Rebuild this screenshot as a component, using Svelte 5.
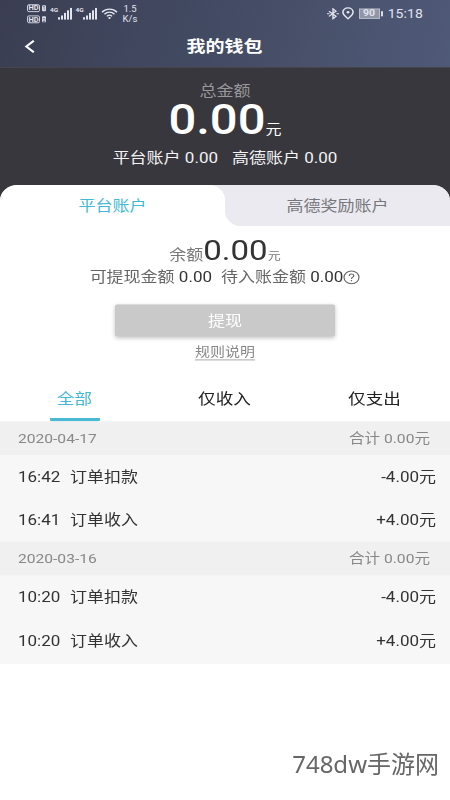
<script>
  const groups = [
    {
      date: '2020-04-17',
      total: '0.00',
      rows: [
        { time: '16:42', title: '订单扣款', amount: '-4.00' },
        { time: '16:41', title: '订单收入', amount: '+4.00' }
      ]
    },
    {
      date: '2020-03-16',
      total: '0.00',
      rows: [
        { time: '10:20', title: '订单扣款', amount: '-4.00' },
        { time: '10:20', title: '订单收入', amount: '+4.00' }
      ]
    }
  ];

  const filters = ['全部', '仅收入', '仅支出'];
  let activeFilter = 0;
</script>

<div class="viewport">
  <div class="screen">
    <header class="header">
      <div class="status-bar">
        <div class="hd-list">
          <div class="hd"><b>HD</b><i>1</i></div>
          <div class="hd"><b>HD</b><i>2</i></div>
        </div>
        {#each [0, 1] as sim (sim)}
          <div class="signal">
            <span>4G</span>
            <svg width="15" height="14" viewBox="0 0 15 14" fill="currentColor">
              <rect x="0" y="11" width="2" height="3" />
              <rect x="3" y="9" width="2" height="5" />
              <rect x="6" y="6" width="2" height="8" />
              <rect x="9" y="3" width="2" height="11" />
              <rect x="12" y="0" width="2" height="14" />
            </svg>
          </div>
        {/each}
        <svg width="17" height="14" viewBox="0 0 17 14" fill="none" stroke="currentColor" stroke-width="1.5">
          <path d="M1 5.2C5.2 0.4 11.8 0.4 16 5.2" />
          <path d="M3.5 7.6C6.3 4.4 10.7 4.4 13.5 7.6" />
          <path d="M6 10C7.5 8.2 9.5 8.2 11 10" />
          <circle cx="8.5" cy="12" r="1.2" fill="currentColor" stroke="none" />
        </svg>
        <div class="speed">1.5<br />K/s</div>
        <div class="status-right">
          <svg width="12" height="14" viewBox="0 0 12 14" fill="none" stroke="currentColor" stroke-width="1.4">
            <path d="M2 4L9 10L6 12.8V1.2L9 4L2 10" />
            <path d="M0 7H2.5M9.5 7H12" />
          </svg>
          <svg width="12" height="15" viewBox="0 0 12 15" fill="none" stroke="currentColor" stroke-width="1.6">
            <path d="M6 13.8C3.5 11.2 0.9 9 0.9 6.2C0.9 3.3 3.2 1.2 6 1.2S11.1 3.3 11.1 6.2C11.1 9 8.5 11.2 6 13.8Z" />
            <circle cx="6" cy="6.2" r="1.4" fill="currentColor" stroke="none" />
          </svg>
          <div class="battery">90</div>
          <span class="clock">15:18</span>
        </div>
      </div>
      <div class="nav">
        <svg class="back" width="12" height="16" viewBox="0 0 12 16" fill="none" stroke="currentColor" stroke-width="2.2">
          <path d="M9.8 1.3L2.3 8L9.8 14.7" />
        </svg>
        <h1>我的钱包</h1>
      </div>
    </header>

    <section class="summary">
      <div class="summary-label">总金额</div>
      <div class="summary-amount"><strong>0.00</strong><span>元</span></div>
      <div class="summary-detail">
        <span>平台账户 0.00</span>
        <span>高德账户 0.00</span>
      </div>
    </section>

    <div class="account-wrap">
      <div class="account-tabs">
        <div class="account-tab active"><span>平台账户</span></div>
        <div class="account-tab"><span>高德奖励账户</span></div>
      </div>
    </div>

    <section class="balance">
      <div class="balance-amount">余额<strong>0.00</strong><small>元</small></div>
      <div class="balance-detail">
        <span>可提现金额 <b>0.00</b></span>
        <span>待入账金额 <b>0.00</b></span>
        <svg width="17" height="17" viewBox="0 0 17 17" fill="none" stroke="currentColor" stroke-width="1.2">
          <circle cx="8.5" cy="8.5" r="7.5" />
          <path d="M6.3 6.8C6.3 3.8 10.8 3.9 10.8 6.6C10.8 8.3 8.5 8.4 8.5 10.3" />
          <path d="M8.5 11.6V13" />
        </svg>
      </div>
      <button class="withdraw">提现</button>
      <div class="rules"><span>规则说明</span></div>
    </section>

    <nav class="filters">
      {#each filters as filter, i}
        <button class="filter" class:active={activeFilter === i} on:click={() => (activeFilter = i)}>
          <span>{filter}</span>
        </button>
      {/each}
    </nav>

    {#each groups as group}
      <section class="group">
        <div class="group-head">
          <span>{group.date}</span>
          <span>合计 {group.total}元</span>
        </div>
        {#each group.rows as row}
          <div class="row">
            <span class="time">{row.time}</span>
            <span class="title">{row.title}</span>
            <span class="amount">{row.amount}元</span>
          </div>
        {/each}
      </section>
    {/each}
  </div>

  <div class="watermark">748dw手游网</div>
</div>

<style>
  :global(body) {
    margin: 0;
    background: #fff;
  }

  .viewport {
    position: relative;
    width: 450px;
    height: 800px;
    overflow: hidden;
    background: #fff;
  }

  /* tall phone screen fitted to the shorter frame */
  .screen {
    width: 450px;
    height: 930px;
    transform: scaleY(0.86);
    transform-origin: 0 0;
    font-family: Roboto, 'Noto Sans CJK SC', sans-serif;
    font-size: 17px;
    line-height: 20px;
    color: #333;
  }

  .header {
    height: 78px;
    color: #fff;
    background: linear-gradient(100deg, #3b3e52 0%, #414961 40%, #485069 65%, #4f5978 100%);
  }

  .status-bar {
    display: flex;
    align-items: center;
    height: 31px;
    padding: 0 27px;
    color: #e2e4ee;
  }

  .hd-list {
    display: flex;
    flex-direction: column;
    gap: 4px;
    width: 23px;
  }

  .hd {
    display: flex;
    align-items: center;
    gap: 2px;
    height: 9px;
    line-height: 7px;
  }

  .hd b {
    width: 11px;
    border: 1px solid #d9dbe6;
    border-radius: 2px;
    font-size: 7.5px;
    text-align: center;
  }

  .hd i {
    width: 4px;
    background: #d9dbe6;
    border-radius: 1px;
    font-style: normal;
    font-size: 6px;
    text-align: center;
    color: #454b62;
  }

  .signal {
    display: flex;
    width: 25.5px;
  }

  .signal span {
    width: 7.5px;
    font-size: 6.5px;
    font-weight: 700;
    line-height: 7px;
  }

  .speed {
    width: 18px;
    margin-left: 3px;
    font-size: 9.5px;
    line-height: 11px;
    text-align: center;
    white-space: nowrap;
  }

  .status-right {
    display: flex;
    align-items: center;
    gap: 3px;
    margin-left: auto;
  }

  .battery {
    position: relative;
    width: 19px;
    height: 10px;
    margin: 0 5px 0 2px;
    border: 1px solid #b9bdca;
    background: #9196a7;
    font-size: 10.5px;
    font-weight: 700;
    line-height: 10px;
    text-align: center;
  }

  .battery::after {
    content: '';
    position: absolute;
    top: 2px;
    right: -4px;
    width: 2px;
    height: 6px;
    background: #d9dbe6;
  }

  .clock {
    font-size: 14px;
    letter-spacing: 0.1px;
  }

  .nav {
    position: relative;
    display: flex;
    align-items: center;
    justify-content: center;
    height: 46px;
  }

  .back {
    position: absolute;
    left: 24px;
    top: 15px;
  }

  h1 {
    margin: 0 1px 0 0;
    font-size: 19px;
    font-weight: 700;
    line-height: 26px;
  }

  .summary {
    display: flex;
    flex-direction: column;
    align-items: center;
    box-sizing: border-box;
    height: 137.5px;
    padding-top: 18px;
    background: #38373d;
    color: #fff;
  }

  .summary-label {
    height: 20px;
    color: #98979c;
  }

  .summary-amount {
    display: flex;
    align-items: baseline;
    height: 40px;
    margin-top: 4px;
    line-height: 40px;
  }

  .summary-amount strong {
    font-size: 49px;
    font-weight: 500;
  }

  .summary-amount span {
    font-size: 16px;
  }

  .summary-detail {
    display: flex;
    gap: 14px;
    margin-top: 13px;
    color: #f2f2f3;
  }

  .account-wrap {
    margin-top: -1px;
    background: linear-gradient(#38373d 50%, #fff 50%);
  }

  .account-tabs {
    display: flex;
    height: 48.5px;
    border-radius: 18px 18px 0 0;
    overflow: hidden;
    background: linear-gradient(#ebeaf0 50%, #fff 50%);
  }

  .account-tab {
    flex: 1;
    display: flex;
    align-items: center;
    justify-content: center;
    border-bottom-left-radius: 17px;
    background: #ebeaf0;
    color: #77777b;
  }

  .account-tab.active {
    border-radius: 0 17px 0 0;
    background: #fff;
    color: #43b9d6;
  }

  .balance {
    display: flex;
    flex-direction: column;
    align-items: center;
    box-sizing: border-box;
    height: 170px;
    padding-top: 9px;
    color: #777;
  }

  .balance-amount {
    display: flex;
    align-items: baseline;
    height: 38px;
    line-height: 38px;
  }

  .balance-amount strong {
    font-size: 33px;
    font-weight: 400;
    color: #333;
  }

  .balance-amount small {
    font-size: 13px;
  }

  .balance-detail {
    display: flex;
    align-items: center;
    height: 20px;
    margin-top: 2px;
    color: #666;
  }

  .balance-detail span + span {
    margin-left: 9px;
  }

  .balance-detail b {
    font-weight: 400;
    color: #333;
  }

  .withdraw {
    width: 220px;
    height: 37px;
    margin-top: 22px;
    padding: 1px 0 0;
    border: 0;
    border-radius: 2px;
    background: #c9c9ca;
    box-shadow: 0 2px 5px rgba(0, 0, 0, 0.25);
    color: #fff;
    font: inherit;
  }

  .rules {
    margin-top: 9px;
    font-size: 15px;
    line-height: 18px;
    color: #888;
  }

  .rules span {
    display: block;
    border-bottom: 1px solid #999;
  }

  .filters {
    display: flex;
    height: 57px;
  }

  .filter {
    flex: 1;
    display: flex;
    justify-content: center;
    padding: 0 1px 0 0;
    border: 0;
    background: none;
    font: inherit;
    font-size: 17.6px;
    color: #222;
  }

  .filter span {
    box-sizing: border-box;
    min-width: 50px;
    height: 57px;
    padding-top: 21px;
    text-align: center;
  }

  .filter.active span {
    border-bottom: 4px solid #4ab9d6;
    border-radius: 2px;
    color: #43b9d6;
  }

  .group {
    background: #f7f7f7;
  }

  .group:last-child {
    padding-bottom: 1.5px;
  }

  .group-head {
    display: flex;
    align-items: center;
    justify-content: space-between;
    height: 39px;
    padding: 0 20px 0 18px;
    background: #f0f0f0;
    font-size: 15.6px;
    color: #888;
  }

  .row {
    display: flex;
    align-items: center;
    height: 50.6px;
    padding: 0 14px 0 18px;
  }

  .time {
    width: 52px;
  }

  .amount {
    margin-left: auto;
  }

  .watermark {
    position: absolute;
    right: 11px;
    bottom: 19px;
    font-family: 'Noto Sans', 'Noto Sans CJK SC', sans-serif;
    font-size: 24px;
    line-height: 34px;
    color: #666;
  }
</style>
